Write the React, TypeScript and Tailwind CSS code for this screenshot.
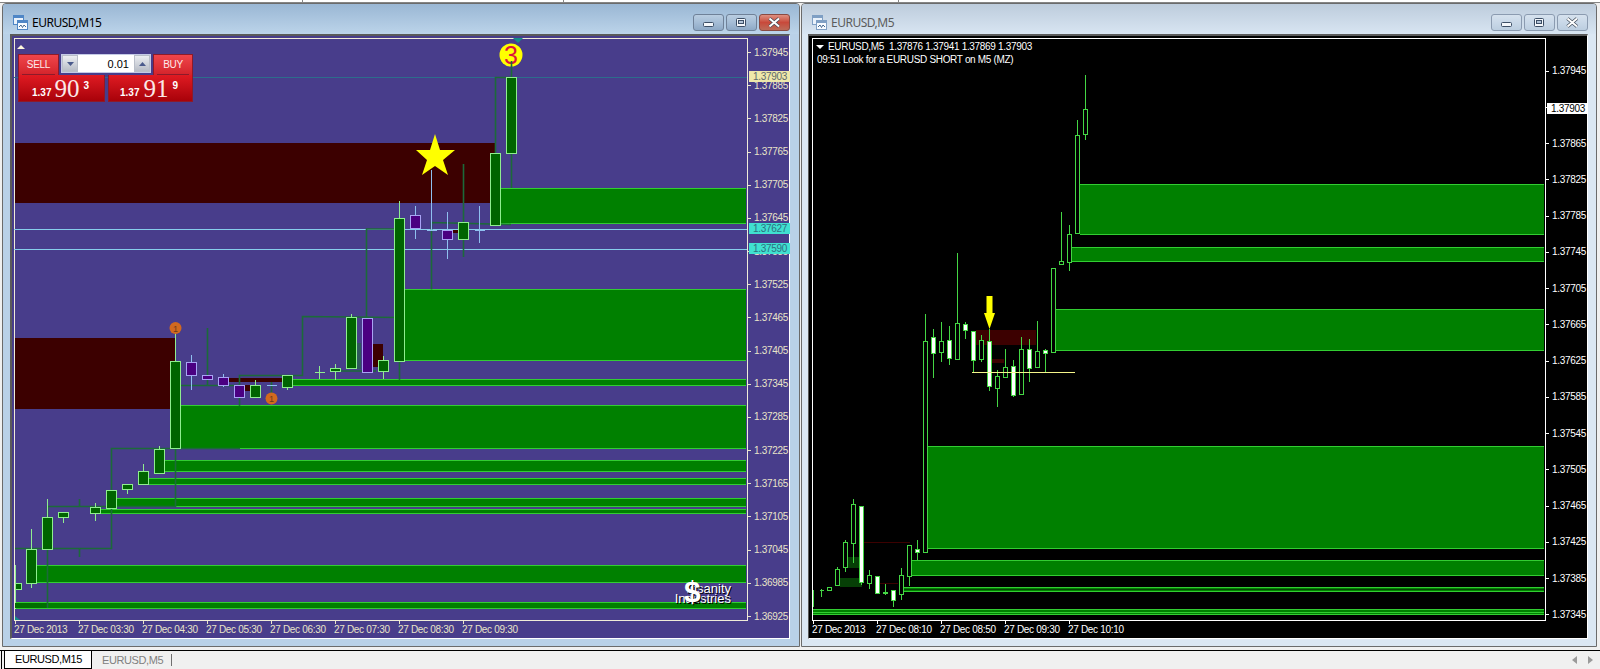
import React from "react";

type Candle = [number, number, number, number, number, number?];
type Zone = [number, number, number];
type Rect = [number, number, number, number];

const LINE = "#32cd32";
const ZONE = "#008000";

const w1Up = "#8fee8f";
const w1Down = "#a9a3f5";

// index, top, bottom, wickTop, wickBottom, kind (0 up, 1 down)
const w1Candles: Candle[] = [
  [1, 549, 583, 529, 588, 0],
  [2, 517, 549, 499, 549, 0],
  [3, 512, 517, 512, 523, 0],
  [5, 507, 513, 503, 521, 0],
  [6, 490, 508, 490, 508, 0],
  [7, 484, 489, 484, 494, 0],
  [8, 471, 484, 464, 484, 0],
  [9, 449, 473, 446, 474, 0],
  [10, 361, 448, 328, 448, 0],
  [11, 362, 375, 355, 390, 1],
  [12, 375, 379, 375, 379, 1],
  [13, 377, 385, 374, 387, 1],
  [14, 385, 397, 385, 397, 1],
  [15, 385, 397, 380, 397, 0],
  [16, 385, 385, 385, 385, 1],
  [17, 375, 387, 375, 390, 0],
  [19, 372, 372, 366, 379, 0],
  [20, 368, 371, 364, 380, 0],
  [21, 317, 368, 314, 368, 0],
  [22, 318, 372, 318, 372, 1],
  [23, 360, 371, 356, 379, 0],
  [24, 218, 361, 201, 361, 0],
  [25, 215, 228, 206, 239, 1],
  [26, 230, 230, 170, 230, 1],
  [27, 230, 239, 212, 259, 1],
  [28, 222, 239, 222, 239, 0],
  [29, 230, 230, 206, 243, 1],
  [30, 153, 225, 153, 225, 0],
  [31, 77, 153, 77, 153, 0],
];

const w1Zones: Zone[] = [
  [500, 188, 223],
  [405, 289, 360],
  [181, 405, 448],
  [292, 379, 385],
  [165, 460, 471],
  [148, 478, 484],
  [116, 498, 506],
  [100, 509, 513],
  [36, 565, 582],
  [15, 602, 608],
];

const w1Red: Rect[] = [
  [15, 143, 480, 60],
  [15, 338, 160, 71],
  [229, 378, 53, 4],
  [373, 344, 10, 23],
  [453, 230, 6, 3],
  [245, 385, 5, 6],
];

const w1Dark: string[] = [
  "15,548.5 111.5,548.5 111.5,448.5 240,448.5",
  "47.5,608 47.5,506.5 175.5,506.5 175.5,385.5 239.5,385.5",
  "239.5,406 239.5,375.5 302.5,375.5 302.5,316.5 399.5,317.5",
  "366.5,318 366.5,229 399,229",
  "399.5,318 399.5,380",
  "431.5,289.5 431.5,222.5 511,224.5",
  "495.5,224 495.5,77.5 511,77.5",
  "79.5,499 79.5,506",
  "79.5,548 79.5,557",
  "207.5,328 207.5,385",
  "271.5,382 271.5,404",
  "463.5,164 463.5,257",
  "511.5,153 511.5,188",
  "335,371 376,371",
];

const w2Candles: Candle[] = [
  [1, 590, 590, 589, 597, 0],
  [2, 587, 590, 587, 590, 0],
  [3, 569, 585, 567, 572, 0],
  [4, 542, 567, 540, 572, 0],
  [5, 504, 543, 499, 563, 0],
  [6, 506, 582, 506, 585, 1],
  [7, 575, 583, 570, 589, 0],
  [8, 576, 593, 576, 593, 1],
  [9, 592, 593, 584, 595, 0],
  [10, 590, 600, 590, 607, 1],
  [11, 575, 594, 568, 600, 0],
  [12, 545, 576, 545, 586, 0],
  [13, 549, 552, 540, 560, 1],
  [14, 341, 552, 314, 553, 0],
  [15, 337, 353, 329, 378, 1],
  [16, 341, 352, 322, 362, 0],
  [17, 340, 358, 326, 365, 1],
  [18, 323, 359, 253, 359, 0],
  [19, 324, 330, 322, 339, 1],
  [20, 331, 360, 331, 372, 1],
  [21, 340, 359, 335, 362, 0],
  [22, 341, 386, 329, 391, 1],
  [23, 376, 388, 370, 407, 0],
  [24, 367, 377, 349, 377, 0],
  [25, 366, 395, 360, 397, 1],
  [26, 349, 394, 337, 394, 0],
  [27, 349, 368, 339, 382, 1],
  [28, 351, 367, 321, 368, 0],
  [29, 350, 353, 349, 372, 1],
  [30, 268, 352, 268, 353, 0],
  [31, 261, 264, 212, 264, 0],
  [32, 234, 262, 225, 271, 0],
  [33, 135, 233, 120, 234, 0],
  [34, 109, 134, 75, 140, 0],
];

const w2Zones: Zone[] = [
  [1080, 184, 234],
  [1072, 247, 261],
  [1056, 309, 350],
  [928, 446, 548],
  [912, 560, 575],
  [904, 587, 591],
  [813, 609, 614],
];

const pricesLeft = [
  "1.37945", "1.37885", "1.37825", "1.37765", "1.37705", "1.37645", "1.37585", "1.37525", "1.37465",
  "1.37405", "1.37345", "1.37285", "1.37225", "1.37165", "1.37105", "1.37045", "1.36985", "1.36925",
];
const pricesRight = [
  "1.37945", "1.37905", "1.37865", "1.37825", "1.37785", "1.37745", "1.37705", "1.37665", "1.37625",
  "1.37585", "1.37545", "1.37505", "1.37465", "1.37425", "1.37385", "1.37345",
];

const labelFont = "[font-family:'Liberation_Sans',sans-serif] text-[10px] tracking-[-0.32px] leading-none whitespace-nowrap";

function WindowIcon({ dim }: { dim?: boolean }) {
  const edge = dim ? "#7f9fc4" : "#4f86c6";
  return (
    <svg width="15" height="15" viewBox="0 0 15 15" className="shrink-0">
      <rect x="0.5" y="0.5" width="10" height="9" fill="#eaf2fb" stroke={edge} />
      <rect x="0.5" y="0.5" width="10" height="2.5" fill={edge} />
      <rect x="4.5" y="5.5" width="10" height="9" fill="#f7fbff" stroke={edge} />
      <rect x="4.5" y="5.5" width="10" height="2.5" fill={edge} />
      <path d="M6 12 L8 10 L9.5 12.5 L11 10 L13 12" fill="none" stroke="#46688f" strokeWidth="1" />
    </svg>
  );
}

function CtlButton({ type, active }: { type: "min" | "max" | "close"; active: boolean }) {
  const isClose = type === "close" && active;
  const cls = isClose
    ? "border-[#8a4a42] bg-linear-to-b from-[#dd8f80] via-[#c8493b] to-[#bb6a58]"
    : active
      ? "border-[#6f8198] bg-linear-to-b from-[#b9cde1] via-[#a5bdd6] to-[#8ea9c6]"
      : "border-[#8b9bb0] bg-linear-to-b from-[#d6e2ee] via-[#c9d8e8] to-[#bccee0]";
  return (
    <div className={`flex h-[17px] w-[31px] items-center justify-center rounded-[3px] border ${cls}`}>
      <svg width="15" height="11" viewBox="0 0 15 11">
        {type === "min" && <rect x="2.5" y="5.5" width="10" height="4" rx="1" fill="#f4f7fb" stroke="#3d4f66" />}
        {type === "max" && (
          <>
            <rect x="2.5" y="1.5" width="9" height="8" rx="1" fill="#f4f7fb" stroke="#3d4f66" />
            <rect x="4.5" y="3.5" width="5" height="3" fill="#b3c4d8" stroke="#3d4f66" />
          </>
        )}
        {type === "close" && (
          <>
            <path d="M2.5 1.5 L12 9.5 M12 1.5 L2.5 9.5" stroke="#3f4a58" strokeWidth="3.4" />
            <path d="M2.5 1.5 L12 9.5 M12 1.5 L2.5 9.5" stroke="#ffffff" strokeWidth="2" />
          </>
        )}
      </svg>
    </div>
  );
}

function Zones({ zones, right }: { zones: Zone[]; right: number }) {
  return (
    <>
      {zones.map(([x, t, b], i) => (
        <g key={i}>
          <rect x={x} y={t} width={right - x} height={b - t} fill={ZONE} />
          <rect x={x} y={t} width={right - x} height={1} fill={LINE} />
          <rect x={x} y={b} width={right - x} height={1} fill={LINE} />
        </g>
      ))}
    </>
  );
}

function LeftPlot() {
  return (
    <svg width="734" height="583" viewBox="14 38 734 583" shapeRendering="crispEdges" className="block">
      {w1Red.map(([x, y, w, h], i) => (
        <rect key={i} x={x} y={y} width={w} height={h} fill="#3c0000" />
      ))}
      <Zones zones={w1Zones} right={746} />
      <rect x="1" y="77" width="746" height="1" fill="#2d6c8c" />
      <rect x="1" y="229" width="746" height="1" fill="#87ceeb" />
      <rect x="1" y="249" width="746" height="1" fill="#87ceeb" />
      <rect x="15" y="565" width="1" height="44" fill={w1Up} />
      <rect x="15" y="583" width="6" height="6" fill="#006400" stroke={w1Up} />
      <rect x="15" y="603" width="32" height="5" fill="#006f00" />
      <g shapeRendering="auto">
        {w1Dark.map((p, i) => (
          <polyline key={i} points={p} fill="none" stroke="#1c6a3a" strokeWidth="1.6" />
        ))}
      </g>
      <rect x="355" y="343" width="6" height="26" fill="#1f6b3f" opacity="0.6" />
      {w1Candles.map(([k, t, b, wt, wb, down], i) => {
        const x = 15.5 + 16 * k;
        const c = down ? w1Down : w1Up;
        return (
          <g key={i}>
            <line x1={x} x2={x} y1={wt} y2={wb} stroke={down ? "#8fc0f0" : w1Up} />
            {b === t ? (
              <line x1={x - 5} x2={x + 5} y1={t + 0.5} y2={t + 0.5} stroke={down ? "#8fc0f0" : w1Up} />
            ) : (
              <rect x={x - 5} y={t + 0.5} width="10" height={b - t} fill={down ? "#4b0082" : "#006400"} stroke={c} />
            )}
          </g>
        );
      })}
      <g shapeRendering="auto">
        <polygon points="435,134 440,150 455,150 443,160 448,175 435,166 422,175 427,160 416,150 430,150" fill="#ffff00" />
        <polygon points="513,38 523,38 518,43" fill="#148a8a" />
        <polygon points="15,616 15,620 20,620" fill="#148a8a" />
        <circle cx="511" cy="55" r="11.5" fill="#ffff00" />
        <text x="511" y="64" textAnchor="middle" fontSize="25" fontFamily="'Liberation Sans',sans-serif" fill="#dc143c">3</text>
        <line x1="511.5" y1="61" x2="511.5" y2="77" stroke="#1c6a3a" strokeWidth="1.6" />
        <circle cx="175.5" cy="328" r="6" fill="#d2691e" />
        <text x="175.5" y="331.5" textAnchor="middle" fontSize="9" fontFamily="'Liberation Sans',sans-serif" fill="#6b3a1a">1</text>
        <circle cx="271.5" cy="398.5" r="6" fill="#d2691e" />
        <text x="271.5" y="402" textAnchor="middle" fontSize="9" fontFamily="'Liberation Sans',sans-serif" fill="#6b3a1a">1</text>
      </g>
    </svg>
  );
}

function RightPlot() {
  const green = "#44d644";
  return (
    <svg width="734" height="583" viewBox="812 38 734 583" shapeRendering="crispEdges" className="block">
      <rect x="976" y="330" width="60" height="15" fill="#3c0000" />
      <rect x="992" y="359" width="12" height="4" fill="#3c0000" />
      <rect x="840" y="578" width="22" height="9" fill="#063f06" />
      <rect x="848" y="557" width="11" height="11" fill="#063f06" />
      <rect x="864" y="542" width="46" height="1" fill="#3c0000" />
      <rect x="880" y="583" width="18" height="1" fill="#3c0000" />
      <Zones zones={w2Zones} right={1544} />
      <rect x="813" y="612" width="731" height="1" fill={LINE} />
      <rect x="904" y="589" width="640" height="1" fill="#063f06" />
      <rect x="813" y="590" width="1" height="17" fill={green} />
      {w2Candles.map(([k, t, b, wt, wb, white], i) => {
        const x = 813.5 + 8 * k;
        return (
          <g key={i}>
            <line x1={x} x2={x} y1={wt} y2={wb} stroke={green} />
            {b === t ? (
              <line x1={x - 2} x2={x + 2} y1={t + 0.5} y2={t + 0.5} stroke={green} />
            ) : (
              <rect x={x - 2} y={t + 0.5} width="4" height={b - t} fill={white ? "#ffffff" : "#000000"} stroke={green} />
            )}
          </g>
        );
      })}
      <rect x="972" y="372" width="103" height="1" fill="#f5f58a" />
      <g shapeRendering="auto">
        <polygon points="986.5,296 992.5,296 992.5,313 995,313 989.5,329 984,313 986.5,313" fill="#ffff00" />
      </g>
    </svg>
  );
}

function PriceAxis({
  prices,
  labelCls,
  tickCls,
  rowCls,
  wrapCls,
  hidden,
}: {
  prices: string[];
  labelCls: string;
  tickCls: string;
  rowCls: string;
  wrapCls: string;
  hidden?: string;
}) {
  return (
    <div className={`flex flex-col ${wrapCls}`}>
      {prices.map((p) => (
        <div key={p} className={`flex shrink-0 items-center ${rowCls}`}>
          <div className={`h-px w-[3px] ${tickCls}`} />
          <span className={`ml-[3px] ${labelFont} ${labelCls} ${p === hidden ? "invisible" : ""}`}>{p}</span>
        </div>
      ))}
    </div>
  );
}

function Badge({ text, cls }: { text: string; cls: string }) {
  return (
    <div className={`absolute left-[1px] flex h-[11px] w-[41px] items-center pl-[4px] ${labelFont} ${cls}`}>{text}</div>
  );
}

function TimeAxis({ labels, tickCls, labelCls }: { labels: string[]; tickCls: string; labelCls: string }) {
  return (
    <div className="flex h-[17px]">
      {labels.map((l) => (
        <div key={l} className="w-16 shrink-0">
          <div className={`ml-px h-[3px] w-px ${tickCls}`} />
          <div className={`mt-[1px] ${labelFont} ${labelCls}`}>{l}</div>
        </div>
      ))}
    </div>
  );
}

function TradePanel() {
  const small = "[font-family:'Liberation_Sans',sans-serif] text-[10px] font-bold text-white leading-none";
  const big = "[font-family:'Liberation_Serif',serif] text-[25px] text-[#fbe8e8] leading-none";
  const head = "w-full border-b border-[#8c1b2a] pb-[3px] text-center [font-family:'Liberation_Sans',sans-serif] text-[10px] tracking-[-0.3px] leading-[13px] text-[#fdeaea]";
  return (
    <div className="absolute left-[3px] top-[15px] flex w-[175px] flex-col">
      <div className="flex h-[21px]">
        <div className="flex h-[21px] w-[41px] items-start justify-center border border-b-0 border-[#8c1b2a] bg-linear-to-b from-[#f0454b] to-[#d3222a] px-[3px] pt-[3px]">
          <div className={head}>SELL</div>
        </div>
        <div className="mx-[2px] flex h-[19px] w-[90px] border border-[#c4cae6] bg-white">
          <div className="flex w-[16px] items-center justify-center border border-[#b9bec9] bg-linear-to-b from-[#eceef2] to-[#b7bcc6]">
            <svg width="7" height="4" viewBox="0 0 7 4"><polygon points="0,0 7,0 3.5,4" fill="#4a5a8c" /></svg>
          </div>
          <div className="flex-1 pr-[5px] pt-[2px] text-right [font-family:'Liberation_Sans',sans-serif] text-[11px] leading-[14px] text-black">0.01</div>
          <div className="flex w-[16px] items-center justify-center border border-[#b9bec9] bg-linear-to-b from-[#eceef2] to-[#b7bcc6]">
            <svg width="7" height="4" viewBox="0 0 7 4"><polygon points="0,4 7,4 3.5,0" fill="#4a5a8c" /></svg>
          </div>
        </div>
        <div className="flex h-[21px] w-[40px] items-start justify-center border border-b-0 border-[#8c1b2a] bg-linear-to-b from-[#f0454b] to-[#d3222a] px-[3px] pt-[3px]">
          <div className={head}>BUY</div>
        </div>
      </div>
      <div className="flex h-[27px] gap-[3px]">
        <div className="flex h-[27px] w-[87px] items-start border border-t-0 border-[#8c1b2a] bg-linear-to-b from-[#e01a22] to-[#a80209] pl-[13px]">
          <span className={`mt-[13px] ${small}`}>1.37</span>
          <span className={`ml-[3px] mt-[1px] ${big}`}>90</span>
          <span className={`ml-[4px] mt-[6px] ${small}`}>3</span>
        </div>
        <div className="flex h-[27px] w-[85px] items-start border border-t-0 border-[#8c1b2a] bg-linear-to-b from-[#e01a22] to-[#a80209] pl-[11px]">
          <span className={`mt-[13px] ${small}`}>1.37</span>
          <span className={`ml-[4px] mt-[1px] ${big}`}>91</span>
          <span className={`ml-[4px] mt-[6px] ${small}`}>9</span>
        </div>
      </div>
    </div>
  );
}

function Logo() {
  const t = "[font-family:'Liberation_Sans',sans-serif] text-[13px] leading-[10px] text-white [text-shadow:1px_1px_0_#000]";
  return (
    <div className="absolute left-[656px] top-[539px] flex h-[30px] w-[60px] flex-col items-end">
      <div className={`mt-[6px] ${t}`}>Insanity</div>
      <div className={t}>Industries</div>
      <div className="absolute left-[13px] top-[-1px] [font-family:'Liberation_Sans',sans-serif] text-[30px] font-bold leading-[30px] text-white [text-shadow:1px_1px_0_#000]">$</div>
    </div>
  );
}

function ChartWindow({
  title,
  active,
  outerCls,
  panelCls,
  frameCls,
  titleCls,
  barCls,
  children,
}: {
  title: string;
  active: boolean;
  outerCls: string;
  panelCls: string;
  frameCls: string;
  titleCls: string;
  barCls: string;
  children: React.ReactNode;
}) {
  return (
    <div className={`flex h-[644px] shrink-0 flex-col rounded-t-[4px] border border-[#6b6b6b] ${frameCls} ${outerCls}`}>
      <div className={`flex h-[30px] shrink-0 items-center rounded-t-[3px] pt-[7px] ${barCls}`}>
        <WindowIcon dim={!active} />
        <span className={`ml-[4px] [font-family:'Noto_Sans',sans-serif] text-[12px] tracking-[-0.5px] leading-none ${titleCls}`}>{title}</span>
        <div className="ml-auto flex gap-[2px]">
          <CtlButton type="min" active={active} />
          <CtlButton type="max" active={active} />
          <CtlButton type="close" active={active} />
        </div>
      </div>
      <div className={`flex h-[605px] flex-col border-b border-r border-white ${panelCls}`}>{children}</div>
    </div>
  );
}

export default function App() {
  return (
    <div className="relative flex h-[669px] w-[1600px] flex-col overflow-hidden bg-[#f0f0f0]">
      <div className="flex h-[3px] shrink-0 border-b border-[#858585] bg-white">
        <div className="h-[2px] w-[303px] border-r border-[#858585]" />
        <div className="h-[2px] w-[261px] border-r border-[#858585]" />
        <div className="h-[2px] w-[335px] border-r border-[#858585]" />
      </div>

      <div className="flex h-[647px] shrink-0 items-start gap-px pl-[2px]">
        <ChartWindow
          title="EURUSD,M15"
          active
          outerCls="w-[798px] pl-[7px] pr-[9px]"
          panelCls="border-l-2 border-t-2 border-l-[#5a5a5a] border-t-[#5a5a5a] bg-[#483d8b] pl-[2px] pt-[2px]"
          frameCls="bg-[#b9d1e8]"
          titleCls="text-black"
          barCls="-ml-[7px] -mr-[9px] bg-linear-to-b from-[#9ab7d4] to-[#bcd4ea] pl-[10px] pr-[9px]"
        >
          <div className="relative flex h-[583px] shrink-0">
            <div className="relative w-[734px] shrink-0 border border-[#f0ecd8]">
              <div className="-ml-px -mt-px">
                <LeftPlot />
              </div>
              <div className="absolute left-[2px] top-[6px] h-0 w-0 border-x-[4px] border-b-[4px] border-x-transparent border-b-[#fff8dc]" />
              <TradePanel />
              <Logo />
            </div>
            <div className="relative flex-1">
              <PriceAxis
                prices={pricesLeft}
                labelCls="text-[#e8e4c8]"
                tickCls="bg-[#e8e4c8]"
                rowCls="h-[33.18px]"
                wrapCls="-mt-[2px]"
              />
              <div className="absolute inset-0 top-[33px]">
                <Badge text="1.37903" cls="top-0 bg-[#eee8aa] text-[#5f6a6a]" />
                <Badge text="1.37627" cls="top-[152px] bg-[#40e0d0] text-[#2f6f7f]" />
                <Badge text="1.37590" cls="top-[172px] bg-[#40e0d0] text-[#2f6f7f]" />
              </div>
            </div>
          </div>
          <TimeAxis
            labels={["27 Dec 2013", "27 Dec 03:30", "27 Dec 04:30", "27 Dec 05:30", "27 Dec 06:30", "27 Dec 07:30", "27 Dec 08:30", "27 Dec 09:30"]}
            tickCls="bg-[#e8e4c8]"
            labelCls="text-[#e8e4c8]"
          />
        </ChartWindow>

        <ChartWindow
          title="EURUSD,M5"
          active={false}
          outerCls="w-[796px] pl-[6px] pr-[8px]"
          panelCls="border-l border-t-2 border-l-[#5a5a5a] border-t-[#5a5a5a] bg-black pl-[3px] pt-[2px]"
          frameCls="bg-[#dbe7f3]"
          titleCls="text-[#5c5c5c]"
          barCls="-ml-[6px] -mr-[8px] bg-linear-to-b from-[#bdccdc] to-[#d8e5f2] pl-[10px] pr-[8px]"
        >
          <div className="relative flex h-[583px] shrink-0">
            <div className="relative w-[734px] shrink-0 border border-white">
              <div className="-ml-px -mt-px">
                <RightPlot />
              </div>
              <div className="absolute left-[3px] top-[6px] h-0 w-0 border-x-[4px] border-t-[4px] border-x-transparent border-t-white" />
              <div className={`absolute left-[15px] top-[3px] ${labelFont} text-white`}>EURUSD,M5&nbsp; 1.37876 1.37941 1.37869 1.37903</div>
              <div className={`absolute left-[4px] top-[16px] ${labelFont} text-white`}>09:51 Look for a EURUSD SHORT on M5 (MZ)</div>
            </div>
            <div className="relative flex-1">
              <PriceAxis
                prices={pricesRight}
                labelCls="text-white"
                tickCls="bg-white"
                rowCls="h-[36.25px]"
                wrapCls="pt-[15px]"
                hidden="1.37905"
              />
              <Badge text="1.37903" cls="top-[65px] h-[11px] bg-white text-black" />
            </div>
          </div>
          <TimeAxis
            labels={["27 Dec 2013", "27 Dec 08:10", "27 Dec 08:50", "27 Dec 09:30", "27 Dec 10:10"]}
            tickCls="bg-white"
            labelCls="text-white"
          />
        </ChartWindow>
      </div>

      <div className="flex h-[19px] shrink-0 items-stretch border-t border-black bg-[#f0f0f0] pl-[1px]">
        <div className="mr-[2px] w-px bg-black" />
        <div className="flex w-[88px] items-center border-x border-b border-black bg-white pl-[10px] [font-family:'Liberation_Sans',sans-serif] text-[11px] tracking-[-0.4px] text-black">EURUSD,M15</div>
        <div className="my-[3px] ml-[10px] flex w-[70px] items-center border-r border-[#707070] [font-family:'Liberation_Sans',sans-serif] text-[11px] tracking-[-0.4px] text-[#808080]">EURUSD,M5</div>
        <div className="ml-auto flex items-center gap-[11px] pr-[7px]">
          <svg width="5" height="8" viewBox="0 0 5 8"><polygon points="5,0 5,8 0,4" fill="#9a9a9a" /></svg>
          <svg width="5" height="8" viewBox="0 0 5 8"><polygon points="0,0 0,8 5,4" fill="#9a9a9a" /></svg>
        </div>
      </div>
    </div>
  );
}
